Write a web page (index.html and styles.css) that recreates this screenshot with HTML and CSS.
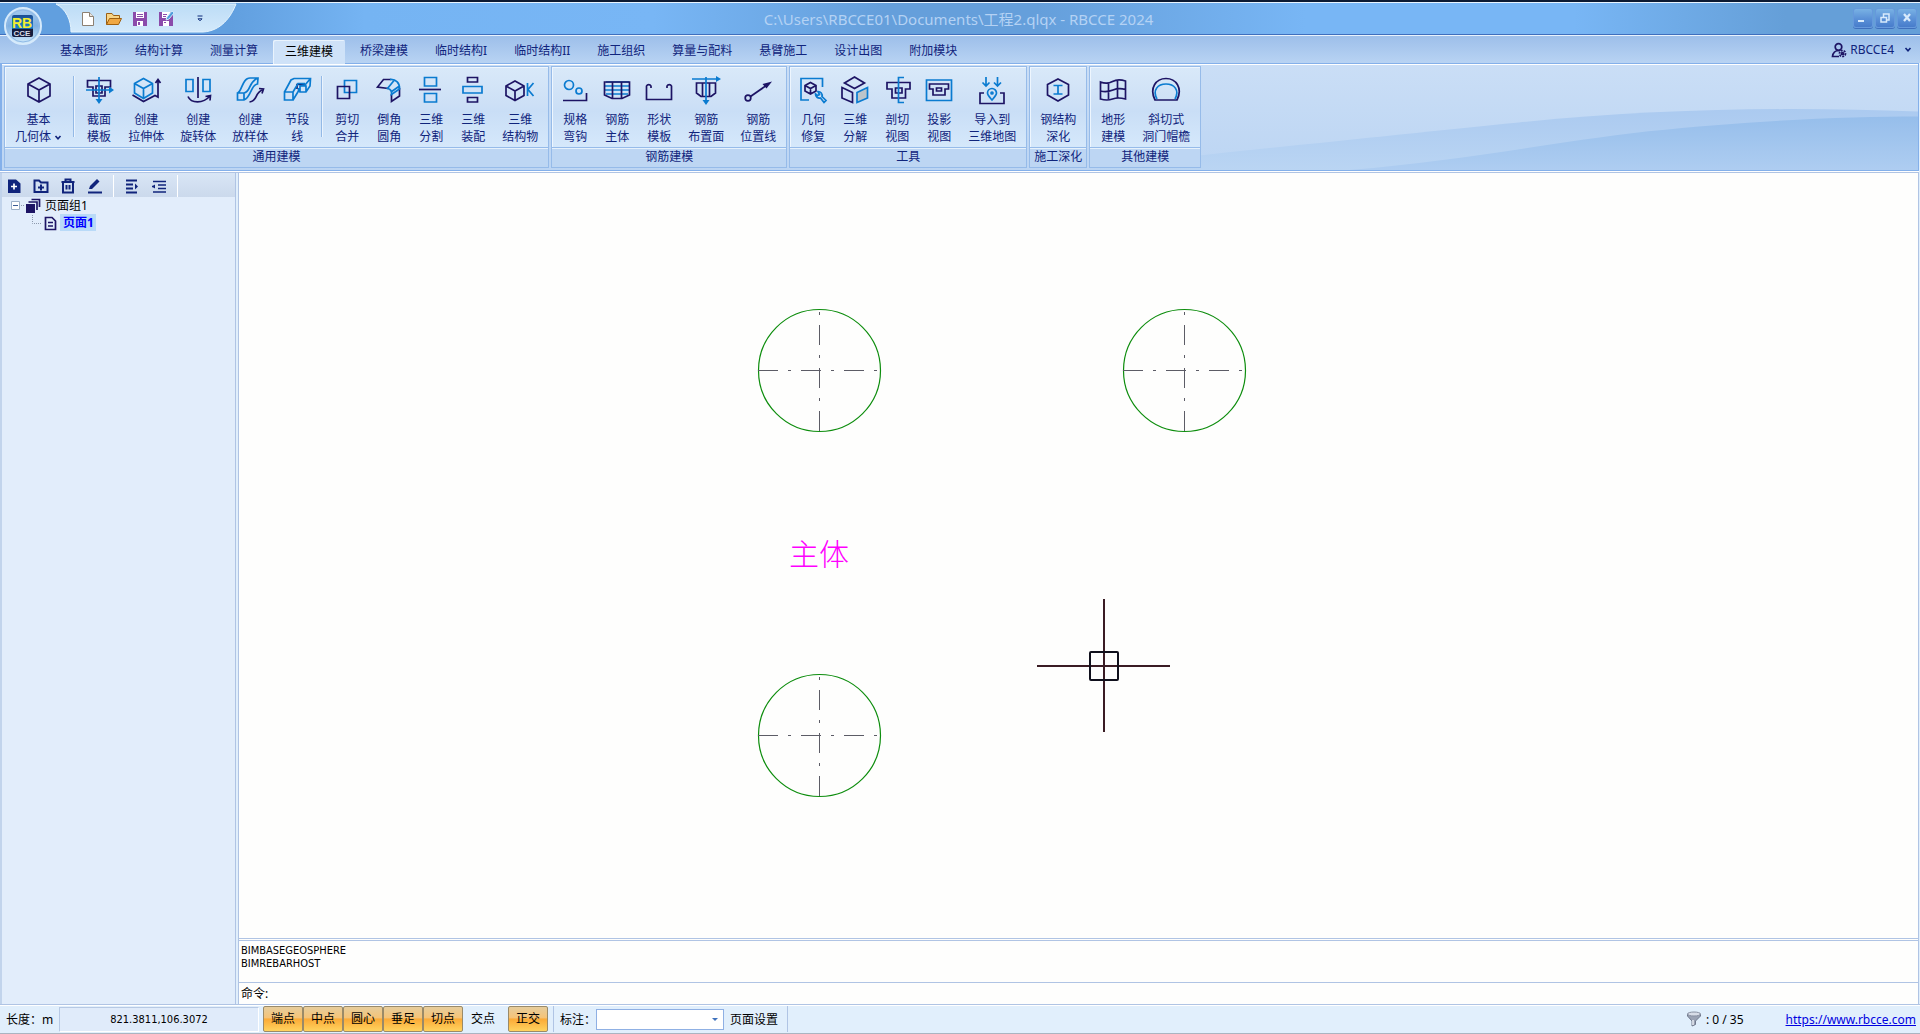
FILE: index.html
```html
<!DOCTYPE html>
<html lang="zh-CN">

<head>
    <meta charset="UTF-8">
    <meta name="viewport" content="width=device-width, initial-scale=1" />
    <title>RBCCE 2024</title>
    <link rel="stylesheet" href="styles.css">
</head>

<body>

    <div class="titlebar">
        <button class="orb" aria-label="RBCCE">
            <svg width="40" height="40" viewBox="0 0 40 40">
                <defs>
                    <linearGradient id="orbFill" x1="0" y1="0" x2="0" y2="1">
                        <stop offset="0" stop-color="#a9cdf0" />
                        <stop offset=".5" stop-color="#7fb0e2" />
                        <stop offset="1" stop-color="#d3ecfb" />
                    </linearGradient>
                    <linearGradient id="logoFill" x1="0" y1="0" x2="0" y2="1">
                        <stop offset="0" stop-color="#1c4d92" />
                        <stop offset=".6" stop-color="#1a87cf" />
                        <stop offset=".65" stop-color="#151c3c" />
                        <stop offset="1" stop-color="#151c3c" />
                    </linearGradient>
                </defs>
                <circle cx="20" cy="20" r="18" fill="url(#orbFill)" stroke="#d6eafb" stroke-width="2" />
                <circle cx="20" cy="20" r="16" fill="none" stroke="#8fb9e6" />
                <rect x="9" y="9" width="21" height="22" rx="2" fill="url(#logoFill)" />
                <text class="logo-big" x="19" y="22" text-anchor="middle">RB</text>
                <text class="logo-small" x="19" y="30" text-anchor="middle">CCE</text>
            </svg>
        </button>
        <svg class="qat-shape" width="190" height="31" viewBox="0 0 190 31">
            <defs>
                <linearGradient id="qatFill" x1="0" y1="0" x2="0" y2="1">
                    <stop offset="0" stop-color="#bcdcf6" />
                    <stop offset="1" stop-color="#d3e9fb" />
                </linearGradient>
            </defs>
            <path d="M5 1C15 6 20 17 20 29H152C170 28 180 14 185 1Z" fill="url(#qatFill)" stroke="#e4f3fd" />
        </svg>
        <div class="qat">
            <button class="qat-new" aria-label="新建">
                <svg width="16" height="16" viewBox="0 0 16 16"><path d="M2.500 1.500H9.500L13.500 5.500V14.500H2.500Z" fill="#fff" stroke="#8c8073" /><path d="M9.500 1.500V5.500H13.500" fill="#e8e4e0" stroke="#8c8073" /></svg>
            </button>
            <button aria-label="打开">
                <svg width="16" height="16" viewBox="0 0 16 16"><path d="M.5 13.500V2.500H6L7.500 4.500H13.500V7" fill="#f7d487" stroke="#9c5f14" /><path d="M.5 13.500L3.500 7.500H15.500L12.500 13.500Z" fill="#f0a844" stroke="#a0600f" /></svg>
            </button>
            <button aria-label="保存">
                <svg width="16" height="16" viewBox="0 0 16 16"><path d="M1 1H15V15H1Z" fill="#8b4bab" /><path d="M4 1H12V7H4ZM5 10H11V15H5Z" fill="#fff" /><path d="M5 3.500H11M5 5.500H11" stroke="#8b4bab" /><path d="M6 11H8V14H6Z" fill="#8b4bab" /></svg>
            </button>
            <button aria-label="另存为">
                <svg width="16" height="16" viewBox="0 0 16 16"><path d="M1 1H15V15H1Z" fill="#8b4bab" /><path d="M4 1H12V7H4ZM5 10H11V15H5Z" fill="#fff" /><path d="M5 3.500H9M5 5.500H8M6 11.500H8" stroke="#8b4bab" /><path d="M8 9L9 6L14 0L16 2L11 8Z" fill="#4d9edb" stroke="#cfe7fb" /></svg>
            </button>
            <button class="qat-more" aria-label="自定义快速访问工具栏">
                <svg width="8" height="8" viewBox="0 0 8 8"><path d="M1.500 1H6.500M2 3.800H6L4 5.800Z" fill="none" stroke="#0d2b7a" /></svg>
            </button>
        </div>
        <div class="title">C:\Users\RBCCE01\Documents\工程2.qlqx - RBCCE 2024</div>
        <div class="window-buttons">
            <button aria-label="最小化"><svg width="20" height="20" viewBox="0 0 20 20"><path d="M5 13H11" stroke="#d8eafc" stroke-width="2" /></svg></button>
            <button aria-label="还原"><svg width="20" height="20" viewBox="0 0 20 20"><path d="M8.500 9V6H14V12H11.500M6 9.500H11.500V14H6Z" fill="none" stroke="#d8eafc" stroke-width="1.500" /></svg></button>
            <button aria-label="关闭"><svg width="20" height="20" viewBox="0 0 20 20"><path d="M7 6L13 13M13 6L7 13" stroke="#d8eafc" stroke-width="2.300" /></svg></button>
        </div>
    </div>

    <div class="tabbar">
        <button class="tab">基本图形</button>
        <button class="tab">结构计算</button>
        <button class="tab">测量计算</button>
        <button class="tab active">三维建模</button>
        <button class="tab">桥梁建模</button>
        <button class="tab">临时结构I</button>
        <button class="tab">临时结构II</button>
        <button class="tab">施工组织</button>
        <button class="tab">算量与配料</button>
        <button class="tab">悬臂施工</button>
        <button class="tab">设计出图</button>
        <button class="tab">附加模块</button>
        <button class="user">
            <svg class="icon" width="16" height="16" viewBox="0 0 16 16"><path class="d" d="M8 8.500C4 8.500 2 10.500 1.500 14.500H8" /><circle class="d" cx="7.500" cy="5" r="3.300" /><circle class="d" cx="11.500" cy="11.500" r="3" stroke-dasharray="2 1" /><circle class="d" cx="11.500" cy="11.500" r="1" /></svg>
            <span>RBCCE4</span>
            <svg class="chevron" width="8" height="6" viewBox="0 0 8 6"><path d="M1.500 1L4 3.800L6.500 1" /></svg>
        </button>
    </div>

    <div class="ribbon">
        <svg class="ribbon-wave" viewBox="0 0 1920 107" preserveAspectRatio="none">
            <defs>
                <linearGradient id="waveBack" x1="0" y1="0" x2="0" y2="1">
                    <stop offset="0" stop-color="#abcaf0" />
                    <stop offset="1" stop-color="#bad5f3" />
                </linearGradient>
                <linearGradient id="waveFront" x1="0" y1="0" x2="0" y2="1">
                    <stop offset="0" stop-color="#96beeb" />
                    <stop offset="1" stop-color="#aecdf1" />
                </linearGradient>
            </defs>
            <path d="M1100 103C1240 88 1400 71 1520 59C1660 45 1790 43 1920 48V107H1100Z" fill="url(#waveBack)" />
            <path d="M1350 107C1460 98 1540 81 1650 68C1750 57 1850 53 1920 53V107Z" fill="url(#waveFront)" />
        </svg>

        <!-- 通用建模 -->
        <div class="group">
            <div class="tools">
                <button class="tool wide">
                    <svg class="icon" viewBox="0 0 32 32"><path class="d" d="M16 4L27 10V22L16 28L5 22V10ZM5 10L16 16L27 10M16 16V28" /></svg>
                    <span>基本<br>几何体 <svg class="chevron" width="8" height="6" viewBox="0 0 8 6"><path d="M1.500 1L4 3.800L6.500 1" /></svg></span>
                </button>
                <div class="divider"></div>
                <button class="tool">
                    <svg class="icon" viewBox="0 0 32 32"><path class="d" d="M4.500 6.500H27.500V13H22V22H10V13H4.500ZM13 12H19V19H13Z" /><path class="b" d="M3 16H28M16 3V27" /><path class="fb" d="M26 12.500L31 16L26 19.500ZM12.500 25L16 30L19.500 25Z" /></svg>
                    <span>截面<br>模板</span>
                </button>
                <button class="tool">
                    <svg class="icon" viewBox="0 0 32 32"><path class="b" d="M13.500 4.500L22.500 9.500V19L13.500 24.500L4.500 19V9.500ZM4.500 9.500L13.500 14.500L22.500 9.500M13.500 14.500V24.500" /><path class="d" d="M2.500 21L13.500 27.500L25 21.500L28 23V6M25.500 9L28 5.500L30.500 9" /></svg>
                    <span>创建<br>拉伸体</span>
                </button>
                <button class="tool">
                    <svg class="icon" viewBox="0 0 32 32"><path class="b" d="M4 5.500H11V17.500H4ZM21 5.500H28V17.500H21Z" /><path class="d" d="M16 3V24M6 22.500C9 29.500 21 30 28 22M23.500 22.500L28.500 21.500L28 26.500" /></svg>
                    <span>创建<br>旋转体</span>
                </button>
                <button class="tool">
                    <svg class="icon" viewBox="0 0 32 32"><path class="b" d="M3.500 19H10V26H3.500ZM3.500 19C8 18 8 4 16 4H24L23.500 10C17 10 17 24 10 26M10 19C17 18 14 8 24 4" /><path class="d" d="M15.500 28C24 27 20 19 29 15.500M25 14.500L29.500 15L28 19.500" /></svg>
                    <span>创建<br>放样体</span>
                </button>
                <button class="tool">
                    <svg class="icon" viewBox="0 0 32 32"><path class="d" d="M16 15V10.500H24" /><path class="b" d="M3.500 18H12V26H3.500ZM3.500 18L10 6L13 4.500H29.500L29 12L25 18H19V12L24 11L29.500 4.500M12 18L17 9.500H24M12 26L17.500 17V14M19 12H25V18" /></svg>
                    <span>节段<br>线</span>
                </button>
                <div class="divider"></div>
                <button class="tool">
                    <svg class="icon" viewBox="0 0 32 32"><path class="b" d="M13.500 6.500H25.500V18.500H13.500Z" /><path class="d" d="M6.500 12.500H18.500V24.500H6.500Z" /></svg>
                    <span>剪切<br>合并</span>
                </button>
                <button class="tool">
                    <svg class="icon" viewBox="0 0 32 32"><path class="d" d="M18 5.500H10.500L4.500 13L15.500 14.500M26.500 14V22L18.500 27.500V20" /><path class="b" d="M17 5.500C23 5 27 9 26.500 15L18.500 20.500C19 17 17 15 14.500 14.500L21 6.500M26.500 12L18 18" /></svg>
                    <span>倒角<br>圆角</span>
                </button>
                <button class="tool">
                    <svg class="icon" viewBox="0 0 32 32"><path class="b" d="M9.500 3.500H21.500V12H9.500ZM9.500 19.500H21.500V28H9.500Z" /><path class="d" d="M4 15.500H26" /></svg>
                    <span>三维<br>分割</span>
                </button>
                <button class="tool">
                    <svg class="icon" viewBox="0 0 32 32"><path class="d" d="M10.500 3.500H20.500V8H10.500ZM10.500 23.500H20.500V28H10.500Z" /><path class="b" d="M6 12.500H25V19H6Z" /></svg>
                    <span>三维<br>装配</span>
                </button>
                <button class="tool">
                    <svg class="icon" viewBox="0 0 32 32"><path class="d" d="M11 7L20 12V21.500L11 26.500L2 21.500V12ZM2 12L11 17L20 12M11 17V26.500" /><path class="b" d="M23.500 9V22M29.500 9L24 15.500L29.500 22" /></svg>
                    <span>三维<br>结构物</span>
                </button>
            </div>
            <div class="group-name">通用建模</div>
        </div>

        <!-- 钢筋建模 -->
        <div class="group">
            <div class="tools">
                <button class="tool">
                    <svg class="icon" viewBox="0 0 32 32"><circle class="b" cx="10" cy="11" r="4.500" /><circle class="b" cx="20" cy="17" r="3" /><path class="d" d="M4 26.500H27.500V19" /></svg>
                    <span>规格<br>弯钩</span>
                </button>
                <button class="tool">
                    <svg class="icon" viewBox="0 0 32 32"><path class="b" d="M4 12H28M4 16H28M5 20H27M5 8H28" /><path class="d" d="M3.500 8H28.500V21L21 24.500H11L3.500 21ZM11.500 8V24.500M20.500 8V24.500" /></svg>
                    <span>钢筋<br>主体</span>
                </button>
                <button class="tool">
                    <svg class="icon" viewBox="0 0 32 32"><path class="d" d="M8 14V12A2.500 2.500 0 0 0 3.500 12V25.500H28.500V12A2.500 2.500 0 0 0 24 12V14" /></svg>
                    <span>形状<br>模板</span>
                </button>
                <button class="tool">
                    <svg class="icon" viewBox="0 0 32 32"><path class="d" d="M6.500 9H25.500V19L21 22.500H11L6.500 19ZM12.500 9V22M19.500 9V22" /><path class="b" d="M2 5H27M16 3V27" /><path class="fb" d="M26 2L31 5L26 8ZM12.500 26L16 31L19.500 26Z" /></svg>
                    <span>钢筋<br>布置面</span>
                </button>
                <button class="tool">
                    <svg class="icon" viewBox="0 0 32 32"><circle class="d" cx="6" cy="24" r="2.800" /><path class="d" d="M8.500 22.500L25 11" /><path class="fd" d="M20.500 10L30 7.500L24.500 14.500Z" /></svg>
                    <span>钢筋<br>位置线</span>
                </button>
            </div>
            <div class="group-name">钢筋建模</div>
        </div>

        <!-- 工具 -->
        <div class="group">
            <div class="tools">
                <button class="tool">
                    <svg class="icon" viewBox="0 0 32 32"><path class="b" d="M25.500 13V4.500H4V26H12M18.500 20A4 4 0 0 0 23.500 24L27 28.500L29 26.500L25 22.500A4 4 0 0 0 21 17.500L22.500 20.500L20.500 21.500Z" /><path class="d" d="M13.500 8.500L19 11.500V17L13.500 20L8 17V11.500ZM8 11.500L13.500 14.500L19 11.500M13.500 14.500V20" /></svg>
                    <span>几何<br>修复</span>
                </button>
                <button class="tool">
                    <svg class="icon" viewBox="0 0 32 32"><path class="d" d="M15.500 3L25.500 9L15.500 14.500L5.500 9ZM3 13.500L13.500 18.500V28.500L3 24Z" /><path class="b solid" d="M18 18.500L28.500 13.500V24L18 28.500Z" /></svg>
                    <span>三维<br>分解</span>
                </button>
                <button class="tool">
                    <svg class="icon" viewBox="0 0 32 32"><path class="d" d="M6 8.500H29V15H24.500V24H11V15H6ZM14.500 14H21V19H14.500Z" /><path class="b" d="M23 3.500H17.500V28.500H23" /></svg>
                    <span>剖切<br>视图</span>
                </button>
                <button class="tool">
                    <svg class="icon" viewBox="0 0 32 32"><path class="b" d="M3.500 6H28.500V26.500H3.500Z" /><path class="d" d="M6.500 10H25.500V15H22V21H10V15H6.500ZM13.500 14H18.500V17H13.500Z" /></svg>
                    <span>投影<br>视图</span>
                </button>
                <button class="tool">
                    <svg class="icon" viewBox="0 0 32 32"><path class="d" d="M8 19H4V29.500H28V19H24" /><path class="b" d="M10 3V12M6.500 8.500L10 12L13.500 8.500M21.500 3V12M18 8.500L21.500 12L25 8.500M16 26C13 22.500 11.500 21 11.500 19A4.500 4.500 0 0 1 20.500 19C20.500 21 19 22.500 16 26Z" /><circle class="b" cx="16" cy="19" r="1" /></svg>
                    <span>导入到<br>三维地图</span>
                </button>
            </div>
            <div class="group-name">工具</div>
        </div>

        <!-- 施工深化 -->
        <div class="group">
            <div class="tools">
                <button class="tool">
                    <svg class="icon" viewBox="0 0 32 32"><path class="d" d="M16 5L26.500 10.500V21L16 27L5.500 21V10.500Z" /><path class="b" d="M11.500 11.500H20.500M11.500 20H20.500M16 11.500V20" /></svg>
                    <span>钢结构<br>深化</span>
                </button>
            </div>
            <div class="group-name">施工深化</div>
        </div>

        <!-- 其他建模 -->
        <div class="group">
            <div class="tools">
                <button class="tool">
                    <svg class="icon" viewBox="0 0 32 32"><path class="d" d="M3.500 8Q10 10.500 15.500 7.500T28.500 7V25Q21 23 15.500 25T3.500 25ZM11.500 9.500V25M20.500 6V24M3.500 17Q10 18.500 16 16T28.500 15.500" /></svg>
                    <span>地形<br>建模</span>
                </button>
                <button class="tool">
                    <svg class="icon" viewBox="0 0 32 32"><path class="d" d="M5 26C-1 14 6 4.500 16 4.500S33 14 27 26Z" /><path class="b" d="M7 25C2 16 8 10 16 10S30 16 25 25" /></svg>
                    <span>斜切式<br>洞门帽檐</span>
                </button>
            </div>
            <div class="group-name">其他建模</div>
        </div>
    </div>

    <div class="workspace">

        <div class="sidebar">
            <div class="sidebar-tools">
                <button aria-label="新建页面"><svg class="icon" viewBox="0 0 16 16"><path class="fn" d="M2 1.500H10L14.500 5.500V15H2Z" /><path class="plus" d="M5 8.500H11M8 5.500V11.500" /></svg></button>
                <button aria-label="新建页面组"><svg class="icon" viewBox="0 0 16 16"><path class="n" d="M1.500 2.500H6L8 4.500H14.500V14H1.500ZM5 9.500H11M8 6.500V12.500" /></svg></button>
                <button aria-label="删除"><svg class="icon" viewBox="0 0 16 16"><path class="n" d="M1.500 4H14.500M5.500 4V1.500H10.500V4M3 4V14.500H13V4M6.500 7V11.500M9.500 7V11.500" /></svg></button>
                <button aria-label="重命名"><svg class="icon" viewBox="0 0 16 16"><path class="fn" d="M2 11L3 8L10 1L12.500 3.500L5 11Z" /><path class="n" d="M1 14.500H15" /></svg></button>
                <div class="sep"></div>
                <button aria-label="展开"><svg class="icon" viewBox="0 0 16 16"><path class="n" d="M2 2.500H13M2 6.500H9M2 10.500H9M2 14.500H13" /><path class="fn" d="M11 5.500L14 8.500L11 11.500Z" /></svg></button>
                <button aria-label="折叠"><svg class="icon" viewBox="0 0 16 16"><path class="n thin" d="M2 3.500H15M7 7H15M7 10.500H15M2 14H15M1 8.500H4" /><path class="fn" d="M4 6.500L1 8.500L4 10.500Z" /></svg></button>
                <div class="sep"></div>
            </div>
            <ul class="tree">
                <li class="tree-row">
                    <svg class="expander" width="20" height="16" viewBox="0 0 20 16"><path d="M6.500 3.500H14.500V11.500H6.500Z" fill="#fff" stroke="#9cb0c8" /><path d="M8 7.500H13" stroke="#3b5b94" /><path d="M16 7.500H20" stroke="#8c98ac" stroke-dasharray="1 1" /></svg>
                    <svg class="icon" viewBox="0 0 16 16"><path class="fd" d="M1 6H10V15H1Z" /><path class="d" d="M3.500 4H12V12M6.500 1.500H14.500V9" /></svg>
                    <span>页面组1</span>
                </li>
                <li class="tree-row child">
                    <svg class="branch" width="10" height="16" viewBox="0 0 10 16"><path d="M.5 0V8.500H10" fill="none" stroke="#8c98ac" stroke-dasharray="1 1" /></svg>
                    <svg class="icon" viewBox="0 0 16 16"><path class="d" d="M3.500 2.500H10L13.500 6V14.500H3.500ZM6 7.500H11M6 11H11" /></svg>
                    <span class="selected">页面1</span>
                </li>
            </ul>
        </div>

        <div class="main">
            <div class="canvas">
                <svg class="drawing" width="100%" height="100%">
                    <defs>
                        <g id="pile">
                            <circle cx=".5" cy=".5" r="61" />
                            <path d="M-61 .5H61" stroke-dasharray="20 10 3 10" />
                            <path d="M.5 61V-61" stroke-dasharray="20 10 3 10" />
                        </g>
                    </defs>
                    <use href="#pile" x="580" y="197" />
                    <use href="#pile" x="945" y="197" />
                    <use href="#pile" x="580" y="562" />
                    <text class="label" x="580" y="392" text-anchor="middle">主体</text>
                    <g class="cursor">
                        <path class="cross" d="M798 493H931M865 426V559" />
                        <rect x="851" y="479" width="28" height="28" rx="1" />
                    </g>
                </svg>
            </div>
            <div class="console">
                <div class="log">BIMBASEGEOSPHERE<br>BIMREBARHOST</div>
                <div class="prompt">
                    <label for="command">命令:</label>
                    <input type="text" id="command">
                </div>
            </div>
        </div>

    </div>

    <div class="statusbar">
        <span class="unit">长度：m</span>
        <div class="coords">821.3811,106.3072</div>
        <button class="snap on">端点</button>
        <button class="snap on">中点</button>
        <button class="snap on">圆心</button>
        <button class="snap on">垂足</button>
        <button class="snap on">切点</button>
        <button class="snap">交点</button>
        <button class="snap on ortho">正交</button>
        <div class="sep"></div>
        <label for="dimension">标注：</label>
        <div class="combo">
            <select id="dimension"><option></option></select>
        </div>
        <button class="page-setup">页面设置</button>
        <div class="sep"></div>
        <div class="filter">
            <svg width="16" height="16" viewBox="0 0 16 16"><path d="M1.500 3V5L6 10V15L9.500 13.500V10L14.500 5V3Z" fill="#9aa2b4" stroke="#70788c" /><path d="M7 9V14" stroke="#e8ecf4" stroke-width="1.500" /><ellipse cx="8" cy="3" rx="6.500" ry="2" fill="#d8dde8" stroke="#8890a2" /></svg>
            <span>: 0 / 35</span>
        </div>
        <a class="site" href="https://www.rbcce.com">https://www.rbcce.com</a>
    </div>

</body>

</html>
```
FILE: styles.css
```css
:root {
    --line: #b0c4e4;
    --ribbon-line: #84b0ea;
    --navy: #10247c;
    --icon-dark: #1d1464;
    --icon-blue: #0a7bd0;
}

* {
    box-sizing: border-box;
}

body {
    background-color: #e1effc;
    color: #000;
    display: flex;
    flex-direction: column;
    font-family: "Noto Sans", "Noto Sans CJK SC", sans-serif;
    font-size: 12px;
    height: 100vh;
    margin: 0;
    overflow: hidden;
}

button {
    background: none;
    border: 0;
    color: inherit;
    font: inherit;
    padding: 0;
}

svg {
    display: block;
    flex: none;
}

.icon path,
.icon circle {
    fill: none;
    stroke-width: 1.7;
}

.icon .d {
    stroke: var(--icon-dark);
}

.icon .b {
    stroke: var(--icon-blue);
}

.icon .solid {
    fill: #bcc5ca;
}

.icon .n {
    stroke: var(--navy);
    stroke-width: 2;
}

.icon .thin {
    stroke-width: 1.5;
}

.icon .plus {
    stroke: #fff;
}

.icon .fd {
    fill: var(--icon-dark);
}

.icon .fb {
    fill: var(--icon-blue);
}

.icon .fn {
    fill: var(--navy);
}

.chevron {
    fill: none;
    stroke: var(--navy);
    stroke-width: 1.6;
}

/* ====== TITLE BAR ====== */

.titlebar {
    align-items: center;
    background: linear-gradient(90deg, #619fdf 0, #619fdf 12%, #75b4f3 19%, #78b6f5 34%, #659fdb 46%, #659fdb 54%, #78b6f5 68%, #78b6f5 82%, #659fd8 93%, #659fd8);
    border-bottom: 1px solid #3f6fbd;
    border-top: 2px solid #0c1a33;
    box-shadow: inset 0 1px #e8f4ff;
    display: flex;
    flex: none;
    height: 35px;
    justify-content: space-between;
    padding-right: 3px;
    position: relative;
}

.orb {
    left: 3px;
    position: absolute;
    top: 4px;
    z-index: 2;
}

.logo-big {
    fill: #f4ee30;
    font-family: "Liberation Sans", sans-serif;
    font-size: 14px;
    font-weight: 700;
}

.logo-small {
    fill: #d9dde6;
    font-family: "Liberation Sans", sans-serif;
    font-size: 8px;
    font-weight: 700;
}

.qat-shape {
    left: 51px;
    position: absolute;
    top: 1px;
}

.qat {
    align-items: center;
    display: flex;
    flex: 1;
    gap: 10px;
    padding-top: 2px;
    position: relative;
}

.qat-new {
    margin-left: 80px;
}

.qat-more {
    padding-left: 12px;
}

.title {
    color: #b4d2f4;
    font-size: 15px;
    line-height: 24px;
    padding-top: 2px;
}

.window-buttons {
    display: flex;
    flex: 1;
    gap: 2px;
    justify-content: flex-end;
}

.window-buttons button {
    background: linear-gradient(#79b2e4, #5d93d8 50%, #477ccb);
    border: 1px solid #6699dc;
    border-radius: 3px;
    box-shadow: 0 1px #3f70bd;
    height: 20px;
    width: 20px;
}

.window-buttons svg {
    margin: -1px;
}

/* ====== TABS ====== */

.tabbar {
    align-items: flex-end;
    background: linear-gradient(#9dbfea, #b8d3f3);
    border-top: 1px solid #e9f3fd;
    color: var(--navy);
    display: flex;
    flex: none;
    gap: 3px;
    height: 28px;
    padding-left: 48px;
}

.tab {
    height: 24px;
    line-height: 24px;
    padding: 0 12px;
    white-space: nowrap;
}

.tab.active {
    background-color: #cfe2f8;
    border-radius: 2px 2px 0 0;
    box-shadow: inset 1px 1px #e9f3fd;
    color: #000;
    line-height: 22px;
    margin-bottom: -1px;
    position: relative;
    z-index: 1;
}

.user {
    align-items: center;
    display: flex;
    gap: 3px;
    height: 27px;
    margin-left: auto;
    padding-right: 8px;
}

.user .chevron {
    margin-left: 7px;
}

/* ====== RIBBON ====== */

.ribbon {
    background: linear-gradient(#cadef6, #bcd5f3);
    border: 1px solid var(--ribbon-line);
    border-left-width: 2px;
    box-shadow: inset 0 1px #fff, 0 1px #fff, 0 2px var(--line);
    color: var(--navy);
    display: flex;
    flex: none;
    gap: 2px;
    margin-right: 1px;
    padding: 2px;
    position: relative;
}

.ribbon-wave {
    height: 100%;
    left: 0;
    position: absolute;
    top: 0;
    width: 100%;
}

.group {
    border: 1px solid #96bbe9;
    box-shadow: inset 0 1px #fff;
    display: flex;
    flex-direction: column;
    position: relative;
}

.tools {
    background: linear-gradient(#d9e9f9, #cde0f6 45%, #c9def6 55%, #d5e8fb);
    box-shadow: inset 1px 1px #eef6fe;
    display: flex;
    padding: 7px 2px 2px;
}

.tool {
    align-items: center;
    display: flex;
    flex-direction: column;
    gap: 5px;
    line-height: 17px;
    min-width: 42px;
    padding: 0 8px;
}

.tool.wide {
    min-width: 62px;
}

.tool .icon {
    height: 32px;
    margin: 0 -4px;
    width: 32px;
}

.tool span {
    white-space: nowrap;
}

.tool .chevron {
    display: inline-block;
    vertical-align: middle;
}

.divider {
    background-color: #93b9e6;
    border-right: 1px solid #eaf3fd;
    height: 61px;
    margin: 2px 3px 0;
    width: 2px;
}

.group-name {
    background-color: #bdd6f3;
    border-top: 1px solid #96bbe9;
    box-shadow: inset 0 1px #e6f1fc;
    height: 20px;
    line-height: 17px;
    text-align: center;
}

/* ====== WORKSPACE ====== */

.workspace {
    display: flex;
    flex: 1;
    margin-top: 2px;
    min-height: 0;
}

.sidebar {
    background-color: #e2edfb;
    border-left: 2px solid #c2d4ec;
    border-right: 1px solid var(--line);
    flex: none;
    width: 236px;
}

.sidebar-tools {
    align-items: center;
    background: linear-gradient(#d9e6f6, #cbd9ec);
    display: flex;
    gap: 11px;
    height: 24px;
    padding: 2px 0 0 4px;
}

.sidebar-tools .icon,
.tree .icon {
    height: 16px;
    width: 16px;
}

.sidebar-tools .sep {
    align-self: stretch;
    background-color: #fff;
    margin: 0 -1px;
    width: 1px;
}

.tree {
    line-height: 17px;
    list-style: none;
    margin: 0;
    padding: 0;
}

.tree-row {
    align-items: center;
    display: flex;
    height: 17px;
    padding-left: 3px;
}

.tree-row span {
    padding: 0 2px 0 3px;
}

.tree-row .expander + .icon {
    margin-right: 1px;
}

.tree-row.child {
    padding-left: 30px;
}

.tree-row .selected {
    background-color: #b9daf8;
    color: #00f;
    font-weight: 700;
    margin-left: 2px;
}

.main {
    border: 1px solid var(--line);
    border-width: 0 1px 0 1px;
    display: flex;
    flex: 1;
    flex-direction: column;
    margin: 0 1px 0 2px;
    min-width: 0;
}

.canvas {
    background-color: #fefefd;
    flex: 1;
    min-height: 0;
}

.drawing circle {
    fill: none;
    stroke: #0d8d0d;
    stroke-width: 1.2;
}

.drawing path {
    fill: none;
    stroke: #5c5c66;
}

.drawing .label {
    fill: #f0f;
    font-family: "Noto Sans CJK SC", sans-serif;
    font-size: 30px;
    font-weight: 300;
}

.drawing .cross {
    stroke: #3a1c24;
    stroke-width: 2;
}

.drawing rect {
    fill: none;
    stroke: #10101c;
    stroke-width: 2;
}

/* ====== CONSOLE ====== */

.console {
    background-color: #fefefd;
    border-top: 3px double var(--line);
    flex: none;
}

.log {
    border-bottom: 1px solid var(--line);
    font-family: "DejaVu Sans Condensed", "Noto Sans CJK SC", sans-serif;
    font-size: 11px;
    height: 42px;
    line-height: 13px;
    padding: 3px 2px;
}

.prompt {
    display: flex;
    height: 21px;
    line-height: 22px;
    padding-left: 2px;
}

.prompt input {
    background: none;
    border: 0;
    flex: 1;
    font: inherit;
    outline: 0;
}

/* ====== STATUS BAR ====== */

.statusbar {
    align-items: center;
    background-color: #e1effc;
    border-bottom: 1px solid #aab4c0;
    border-top: 1px solid var(--line);
    box-shadow: inset 0 1px #fff;
    display: flex;
    flex: none;
    height: 30px;
    padding: 1px 4px 1px 6px;
}

.unit {
    width: 53px;
}

.coords {
    background-color: #e0ebfa;
    border: 1px solid #fff;
    border-left-color: #b7c9e4;
    border-top-color: #b7c9e4;
    font-family: "DejaVu Sans Condensed", sans-serif;
    font-size: 11px;
    height: 25px;
    line-height: 23px;
    margin-right: 4px;
    text-align: center;
    width: 200px;
}

.snap {
    border: 1px solid transparent;
    border-radius: 2px;
    height: 26px;
    line-height: 24px;
    width: 40px;
}

.snap.on {
    background: linear-gradient(#e6cd9d, #f5c377 45%, #fbaa37 50%, #ffd35f);
    border-color: #9a8a68;
}

.ortho {
    margin: 0 5px;
}

.statusbar .sep {
    align-self: stretch;
    background-color: var(--line);
    margin-right: 6px;
    width: 1px;
}

.combo {
    position: relative;
}

.combo select {
    appearance: none;
    background-color: #fff;
    border: 1px solid #8fb0e4;
    border-radius: 0;
    display: block;
    height: 21px;
    width: 128px;
}

.combo::after {
    border: 3px solid transparent;
    border-bottom: 0;
    border-top-color: #3f72bd;
    content: "";
    position: absolute;
    right: 6px;
    top: 9px;
}

.page-setup {
    padding: 0 9px 0 6px;
}

.filter {
    align-items: center;
    display: flex;
    gap: 4px;
    margin-left: auto;
    padding-right: 42px;
}

.site {
    color: #0000e0;
}
```
